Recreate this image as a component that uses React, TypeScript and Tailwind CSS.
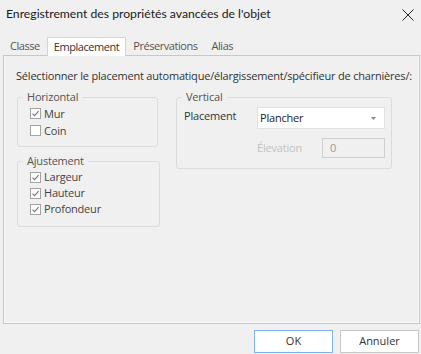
import React from "react";

const tabs = ["Classe", "Emplacement", "Préservations", "Alias"];

function Check({ checked, label, rowClass }: { checked: boolean; label: string; rowClass: string }) {
  return (
    <div className={`flex items-center ${rowClass}`}>
      <span className="w-[11px] h-[11px] border border-[#a3a3a3] bg-white flex items-center justify-center shrink-0">
        {checked && (
          <svg width="9" height="9" viewBox="0 0 9 9">
            <path d="M1.5 4.6 L3.6 6.7 L7.6 2.2" fill="none" stroke="#777" strokeWidth="1.1" />
          </svg>
        )}
      </span>
      <span className="ml-[3px] text-[11px] tracking-[-0.2px] leading-[16px] text-[#444]">{label}</span>
    </div>
  );
}

export default function App() {
  return (
    <div className="w-[421px] h-[354px] bg-[#f0f0f0] flex flex-col font-['Open_Sans',sans-serif] overflow-hidden">
      {/* title bar */}
      <div className="h-[37px] flex items-start justify-between pl-[6px] pr-[6px] pt-[6px]">
        <span className="font-['Lato',sans-serif] text-[12.2px] leading-[16px] text-[#1a1a1a]">Enregistrement des propriétés avancées de l'objet</span>
        <svg className="mt-[3px] mr-[1px]" width="12" height="12" viewBox="0 0 12 12">
          <path d="M0.5 0.5 L11.5 11.5 M11.5 0.5 L0.5 11.5" stroke="#222" strokeWidth="1" />
        </svg>
      </div>

      {/* tabs */}
      <div className="flex ml-[3px] h-[18px] relative z-10 text-[11px] tracking-[-0.45px] leading-[18px]">
        {tabs.map((t, i) =>
          i === 1 ? (
            <div key={t} className="px-[6px] h-[19px] bg-white border border-b-0 border-[#d4d4d4] text-[#333]">
              {t}
            </div>
          ) : (
            <div key={t} className="px-[7px] h-[18px] text-[#555]">
              {t}
            </div>
          )
        )}
      </div>

      {/* panel */}
      <div className="mx-[3px] mr-[1px] h-[269px] border border-[#c8c8c8] shadow-[inset_1px_0_0_#fafafa,inset_-1px_-1px_0_#fafafa] pl-[12px] pt-[12px]">
        <div className="text-[11px] tracking-[-0.2px] leading-[16px] text-[#333] whitespace-nowrap">
          Sélectionner le placement automatique/élargissement/spécifieur de charnières/:
        </div>

        <div className="flex mt-[5px]">
          <div className="flex flex-col">
            <fieldset className="ml-[1px] w-[141px] border border-[#dcdcdc] rounded-[3px] pb-[7px]">
              <legend className="ml-[5px] px-[4px] text-[11px] tracking-[-0.2px] leading-[16px] text-[#555]">Horizontal</legend>
              <div className="pl-[12px]">
                <Check checked label="Mur" rowClass="h-[17px]" />
                <Check checked={false} label="Coin" rowClass="h-[17px]" />
              </div>
            </fieldset>
            <fieldset className="ml-[1px] mt-[6px] w-[143px] border border-[#dcdcdc] rounded-[3px] pb-[9px]">
              <legend className="ml-[5px] px-[4px] text-[11px] tracking-[-0.2px] leading-[16px] text-[#555]">Ajustement</legend>
              <div className="pl-[12px]">
                <Check checked label="Largeur" rowClass="h-[16px]" />
                <Check checked label="Hauteur" rowClass="h-[16px]" />
                <Check checked label="Profondeur" rowClass="h-[16px]" />
              </div>
            </fieldset>
          </div>

          <fieldset className="ml-[16px] w-[216px] h-[80px] border border-[#dcdcdc] rounded-[3px]">
            <legend className="ml-[5px] px-[4px] text-[11px] tracking-[-0.2px] leading-[16px] text-[#555]">Vertical</legend>
            <div className="pl-[7px]">
              <div className="flex items-start mt-[2px]">
                <span className="w-[73px] text-[11px] tracking-[-0.2px] leading-[18px] text-[#333]">Placement</span>
                <div className="w-[128px] h-[22px] bg-white border border-[#e2e2e2] flex items-center justify-between pl-[2px] pr-[8px]">
                  <span className="text-[11px] tracking-[-0.2px] leading-[16px] text-[#222]">Plancher</span>
                  <svg width="5" height="3" viewBox="0 0 5 3">
                    <path d="M0 0 L5 0 L2.5 3 Z" fill="#888" />
                  </svg>
                </div>
              </div>
              <div className="flex items-center mt-[9px] ml-[73px]">
                <span className="w-[65px] text-[11px] tracking-[-0.2px] leading-[16px] text-[#c2c2c2]">Élevation</span>
                <div className="w-[63px] h-[20px] border border-[#cfcfcf] flex items-center pl-[7px] text-[11px] text-[#9a9a9a]">0</div>
              </div>
            </div>
          </fieldset>
        </div>
      </div>

      {/* footer */}
      <div className="flex justify-end gap-[7px] mt-[6px] pr-[2px]">
        <button className="w-[79px] h-[23px] bg-white border border-[#7eb4ea] text-[11px] text-[#333]">OK</button>
        <button className="w-[79px] h-[23px] bg-white border border-[#c8c8c8] text-[11px] text-[#333]">Annuler</button>
      </div>
    </div>
  );
}
